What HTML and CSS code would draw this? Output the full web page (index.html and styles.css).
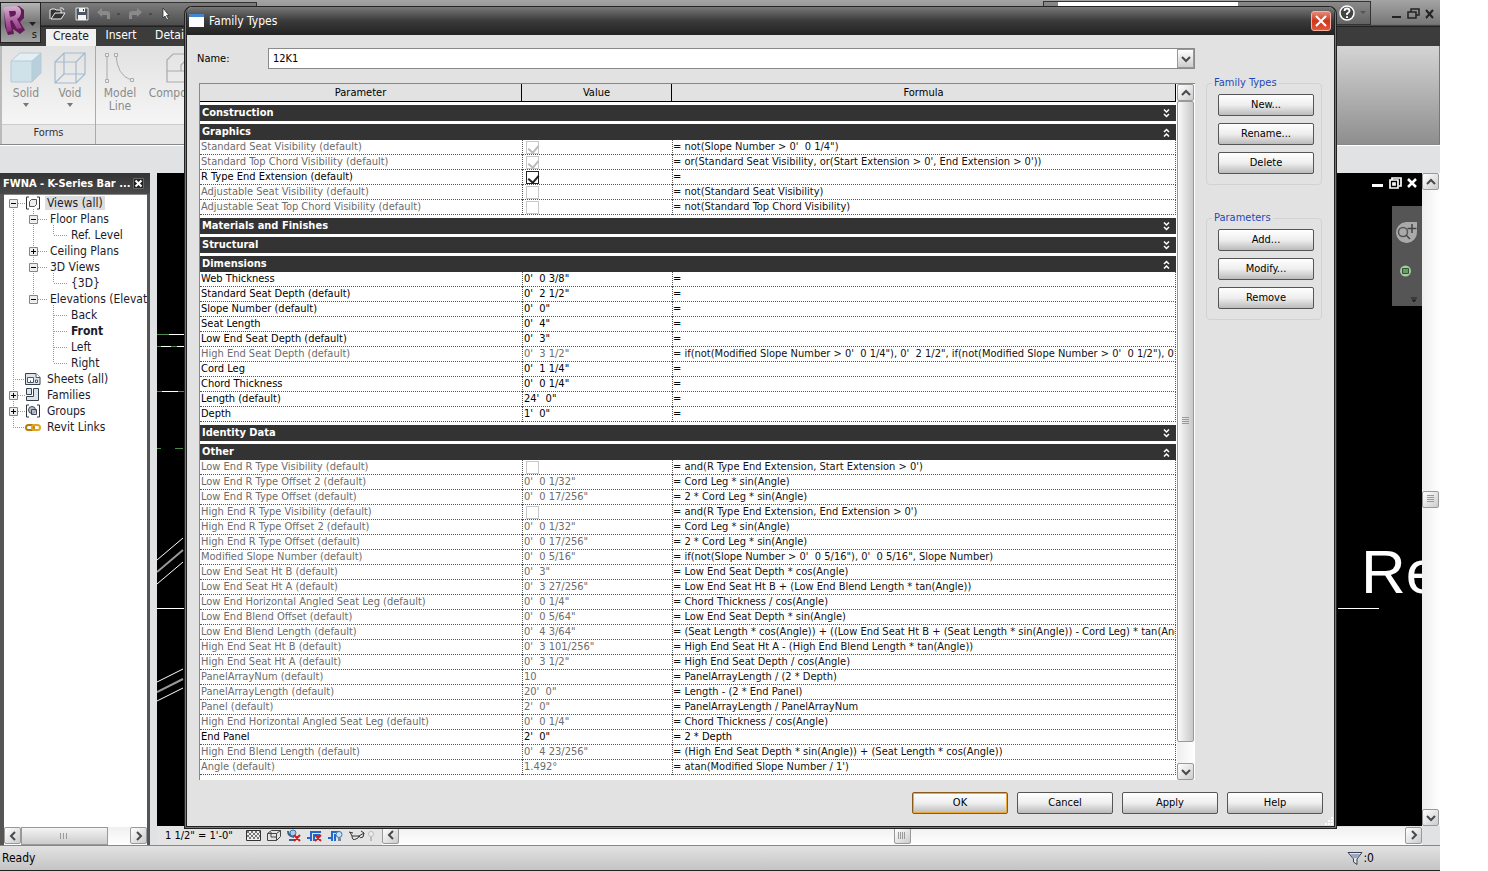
FILE: index.html
```html
<!DOCTYPE html>
<html lang="en">
<head>
<meta charset="utf-8">
<title>Family Types</title>
<link rel="stylesheet" href="styles.css">
</head>
<body>
<svg class="defs" aria-hidden="true">
  <symbol id="up" viewBox="0 0 10 10"><path d="M1 7l4-4 4 4" fill="none" stroke="#444a50" stroke-width="2"/></symbol>
  <symbol id="down" viewBox="0 0 10 10"><path d="M1 3l4 4 4-4" fill="none" stroke="#444a50" stroke-width="2"/></symbol>
  <symbol id="left" viewBox="0 0 10 10"><path d="M7 1L3 5l4 4" fill="none" stroke="#444a50" stroke-width="2"/></symbol>
  <symbol id="right" viewBox="0 0 10 10"><path d="M3 1l4 4-4 4" fill="none" stroke="#444a50" stroke-width="2"/></symbol>
  <symbol id="open" viewBox="0 0 7 9"><path d="M1 0.5l2.500 2.500L6 0.5M1 5l2.500 2.500L6 5" fill="none" stroke="#fff" stroke-width="1.500"/></symbol>
  <symbol id="shut" viewBox="0 0 7 9"><path d="M1 4l2.500-2.500L6 4M1 8.500L3.500 6 6 8.500" fill="none" stroke="#fff" stroke-width="1.500"/></symbol>
  <symbol id="plus" viewBox="0 0 9 9"><path d="M.5.5h8v8h-8z" fill="#eee" stroke="#858585"/><path d="M2 4.500h5M4.500 2v5" stroke="#000"/></symbol>
  <symbol id="minus" viewBox="0 0 9 9"><path d="M.5.5h8v8h-8z" fill="#eee" stroke="#858585"/><path d="M2 4.500h5" stroke="#000"/></symbol>
</svg>

<div class="app">
  <header class="titlebar">
    <button class="app-menu" aria-label="Application menu">
      <svg width="38" height="38" viewBox="0 0 38 38">
        <defs><linearGradient id="rg" x1="0" y1="0" x2="0" y2="1"><stop offset="0" stop-color="#d7b4d2"/><stop offset=".5" stop-color="#b06aa4"/><stop offset="1" stop-color="#8a2c7a"/></linearGradient></defs>
        <path d="M3 5l3-1 12-2 5 4v8l-4 4 5 8-5 4-7-5 1 5-6 1-3-8z" fill="#641a58"/>
        <path d="M2 5l2-2 11-1q5 1 5 6 0 5-4 7l5 9-5 1-5-9-2 1 2 10-5 1-3-21zM8 7l1 6 4-1q2-1 2-3 0-3-3-2z" fill="url(#rg)" fill-rule="evenodd"/>
        <path d="M28 18h7l-3.500 4z" fill="#222"/>
      </svg>
      <span class="app-letter">s</span>
    </button>
    <div class="quick">
      <svg width="18" height="14" viewBox="0 0 18 14"><path d="M1 12V3l2-1h3l1 1h5v3M2 12l4-6h10l-4 6z" fill="#333" stroke="#eee"/><path d="M11 1q3-1 4 2" fill="none" stroke="#eee"/></svg>
      <svg width="14" height="14" viewBox="0 0 14 14"><path d="M1 1h12v12H1z" fill="#4c5560" stroke="#dde3ea"/><path d="M4 1h6v4H4zM3 8h8v5H3z" fill="#f4f4f4"/><path d="M8 2h1v2H8z" fill="#333"/></svg>
      <svg width="23" height="14" viewBox="0 0 23 14"><path d="M0 5l5-4v3h5q3 0 3 3v5h-3V8H5v2z" fill="#8a8a8a"/><path d="M20 7h3" stroke="#333"/></svg>
      <svg width="25" height="14" viewBox="0 0 25 14"><path d="M14 5L9 1v3H4Q1 4 1 7v5h3V8h5v2z" fill="#8a8a8a"/><path d="M21 7h3" stroke="#333"/></svg>
      <svg width="9" height="14" viewBox="0 0 9 14"><path d="M2 1v10l2-2 2 4 1.500-1-2-3.500H8z" fill="#fff" stroke="#222" stroke-width=".7"/></svg>
    </div>
    <div class="info">
      <span class="info-field"></span>
      <svg width="16" height="16" viewBox="0 0 16 16"><circle cx="8" cy="8" r="7" fill="#444" stroke="#fff" stroke-width="1.500"/><path d="M5.500 6q0-2.500 2.500-2.500T10.500 6Q10.500 7 8 8.700V10" fill="none" stroke="#fff" stroke-width="1.800"/><path d="M7 11.200h2v1.800H7z" fill="#fff"/></svg>
      <svg width="6" height="4" viewBox="0 0 6 4"><path d="M0 0h6L3 3z" fill="#555"/></svg>
    </div>
    <div class="winctl">
      <svg width="44" height="14" viewBox="0 0 44 14"><path d="M1 10h9" stroke="#222" stroke-width="2"/><path d="M20 5V2h8v6h-3M17 5h8v6h-8z" fill="none" stroke="#222" stroke-width="1.500"/><path d="M35 3l7 8M42 3l-7 8" stroke="#222" stroke-width="2"/></svg>
    </div>
  </header>
  <nav class="tabs">
    <button class="tab tab-on">Create</button><button class="tab">Insert</button><button class="tab">Detail</button>
  </nav>
  <section class="ribbon">
    <div class="panel">
      <div class="tools">
        <button class="tool"><svg width="32" height="32" viewBox="0 0 32 32"><path d="M1 9h21v21H1z" fill="#cfe1e9"/><path d="M1 9l9-8h21l-9 8z" fill="#e4eff4"/><path d="M22 9l9-8v20l-9 9z" fill="#b9d0dc"/><path d="M1 9h21v21H1zM1 9l9-8h21v20l-9 9M22 9l9-8" fill="none" stroke="#b4cbd8"/></svg><span>Solid</span><i class="caret"></i></button>
        <button class="tool"><svg width="32" height="32" viewBox="0 0 32 32"><path d="M1 10h21v21H1zM1 10l9-9h21v21l-9 9M22 10l9-9M10 1v21H31M10 22l-9 9" fill="none" stroke="#a5bace" stroke-width="1.200"/></svg><span>Void</span><i class="caret"></i></button>
      </div>
      <div class="panel-name">Forms</div>
    </div>
    <div class="panel panel-wide">
      <div class="tools">
        <button class="tool"><svg width="32" height="32" viewBox="0 0 32 32"><path d="M3 3v25M12 3q1 20 15 25" fill="none" stroke="#aaa"/><path d="M1.500 1.500h3v3h-3zM1.500 27.500h3v3h-3zM10.500 1.500h3v3h-3zM26.500 26.500h3v3h-3z" fill="#eee" stroke="#aaa"/></svg><span>Model<br>Line</span></button>
        <button class="tool tool-wide"><svg width="32" height="32" viewBox="0 0 32 32"><path d="M3 19V8l6-6h20v17M3 19v11h26V19zM3 19h14v-6l4-4h8" fill="none" stroke="#aaa" stroke-width="1.200"/></svg><span>Component</span></button>
      </div>
      <div class="panel-name"></div>
    </div>
    <div class="ribbon-rest"></div>
  </section>
  <div class="options"></div>

  <main class="work">
    <aside class="browser">
      <div class="browser-head"><span>FWNA - K-Series Bar ...</span><button class="bare" aria-label="Close browser"><svg width="11" height="11" viewBox="0 0 11 11"><path d="M.5.5h10v10H.5z" fill="#222" stroke="#666"/><path d="M2.500 2.500l6 6M8.500 2.500l-6 6" stroke="#fff" stroke-width="2"/></svg></button></div>
      <div class="browser-body">
        <svg class="guides" width="142" height="240" viewBox="0 0 142 240"><path d="M9.500 14v218M29.500 14v90M49.500 30v10M49.500 78v10M49.500 110v58M14 8.500h8M9 184.500h12M14 200.500h8M14 216.500h8M9 232.500h12M34 24.500h10M34 56.500h10M34 72.500h10M34 104.500h10M50 40.500h14M50 88.500h14M50 120.500h14M50 136.500h14M50 152.500h14M50 168.500h14" fill="none" stroke="#999" stroke-dasharray="1 1"/></svg>
        <ul class="tree">
          <li class="l0"><svg width="9" height="9"><use href="#minus"/></svg><svg class="ico" width="16" height="14" viewBox="0 0 16 14"><path d="M4 1H1.500v12H4M12 1h2.500v12H12" fill="none" stroke="#333"/><path d="M4.500 5.500l2-2h5v5l-2 2h-5z" fill="#eee" stroke="#555"/></svg><span class="picked">Views (all)</span></li>
          <li class="l1"><svg width="9" height="9"><use href="#minus"/></svg><span>Floor Plans</span></li>
          <li class="l2"><span>Ref. Level</span></li>
          <li class="l1"><svg width="9" height="9"><use href="#plus"/></svg><span>Ceiling Plans</span></li>
          <li class="l1"><svg width="9" height="9"><use href="#minus"/></svg><span>3D Views</span></li>
          <li class="l2"><span>{3D}</span></li>
          <li class="l1"><svg width="9" height="9"><use href="#minus"/></svg><span>Elevations (Elevati</span></li>
          <li class="l2"><span>Back</span></li>
          <li class="l2"><b>Front</b></li>
          <li class="l2"><span>Left</span></li>
          <li class="l2"><span>Right</span></li>
          <li class="l0"><i class="no-box"></i><svg class="ico" width="16" height="14" viewBox="0 0 16 14"><path d="M.5 1.500H11l4 4v7H.5z" fill="#dfe5ec" stroke="#38424e"/><path d="M11 1.500v4h4M2.500 5.500h6v5h-6zM5.500 8.500v2M10.500 8v2.500h2V8z" fill="#fff" stroke="#4a5868"/></svg><span>Sheets (all)</span></li>
          <li class="l0"><svg width="9" height="9"><use href="#plus"/></svg><svg class="ico" width="16" height="14" viewBox="0 0 16 14"><path d="M1.500.5h5v6h-5zM8.500.5h5v12h-12v-4h7z" fill="#dfe5ec" stroke="#38424e"/></svg><span>Families</span></li>
          <li class="l0"><svg width="9" height="9"><use href="#plus"/></svg><svg class="ico" width="16" height="14" viewBox="0 0 16 14"><path d="M4 1H1.500v12H4M12 1h2.500v12H12" fill="none" stroke="#333"/><circle cx="7" cy="6" r="3.500" fill="#b7c2ce" stroke="#445"/><path d="M6.500 5.500h5v5h-5z" fill="#b7c2ce" fill-opacity=".6" stroke="#445"/></svg><span>Groups</span></li>
          <li class="l0"><i class="no-box"></i><svg class="ico" width="16" height="14" viewBox="0 0 16 14"><rect x="1" y="5" width="8" height="5" rx="2.500" fill="none" stroke="#b87b08" stroke-width="2"/><rect x="7" y="5" width="8" height="5" rx="2.500" fill="none" stroke="#e0a51a" stroke-width="2"/></svg><span>Revit Links</span></li>
        </ul>
      </div>
      <div class="hbar">
        <button class="sb" aria-label="Scroll left"><svg width="10" height="10"><use href="#left"/></svg></button>
        <span class="thumb-h"><svg width="9" height="6" viewBox="0 0 9 6"><path d="M.5 0v6M3.500 0v6M6.500 0v6" stroke="#999"/></svg></span>
        <span class="grow"></span>
        <button class="sb" aria-label="Scroll right"><svg width="10" height="10"><use href="#right"/></svg></button>
      </div>
    </aside>

    <section class="view">
      <div class="canvas">
        <svg class="drawing" width="30" height="653" viewBox="0 0 30 653"><path d="M0 161.500h12M0 173.500h30M0 218.500h30M0 275.500h4M18 275.500h8" stroke="#4a8a4a"/><path d="M12 161.500h18M4 173.500h10M20 173.500h8M5 218.500h16M0 435.500h30M0 387l26-22M0 411l26-22M0 509l26-13M0 528l26-13" stroke="#fff" fill="none"/><path d="M0 399l26-22M0 519l26-13" stroke="#999" stroke-width="2"/></svg>
        <div class="level"><span class="level-name">Re</span></div>
        <div class="doc-ctl"><svg width="48" height="12" viewBox="0 0 48 12"><path d="M1 8.500h11" stroke="#fff" stroke-width="3"/><path d="M21 3V1h9v8h-2M19 3h8v8h-8zM22 6h2v2h-2z" fill="none" stroke="#fff" stroke-width="1.700"/><path d="M37 2l8 8M45 2l-8 8" stroke="#fff" stroke-width="2.500"/></svg></div>
        <div class="navbar"><svg width="30" height="100" viewBox="0 0 30 100"><path d="M14 16h11v10a10.500 10.500 0 1 1-11-10z" fill="#aaa"/><circle cx="11" cy="26" r="4.500" fill="none" stroke="#555" stroke-width="1.500"/><path d="M14 29l4 4M20 18v9M15.500 22.500h9" stroke="#444" stroke-width="1.500"/><circle cx="13.500" cy="65" r="5.500" fill="#a8c8a4"/><path d="M10.500 62.500h6v5h-6z" fill="#6d9a69" stroke="#2d5a2c"/><path d="M19 92h6M20 94h4l-2 2z" fill="#222" stroke="#222"/></svg></div>
      </div>
      <div class="vbar view-v">
        <button class="sb" aria-label="Scroll up"><svg width="10" height="10"><use href="#up"/></svg></button>
        <span class="knob"><svg width="8" height="9" viewBox="0 0 8 9"><path d="M0 .5h7M0 2.500h7M0 4.500h7M0 6.500h7" stroke="#999"/></svg></span>
        <button class="sb" aria-label="Scroll down"><svg width="10" height="10"><use href="#down"/></svg></button>
      </div>
      <div class="viewbar">
        <button class="bare scale">1 1/2" = 1'-0"</button>
        <svg class="view-icons" width="130" height="14" viewBox="0 0 130 14"><path d="M.5 1.500h14v10H.5z" fill="#eee" stroke="#333"/><path d="M1 3h13M1 7h13" stroke="#777" stroke-width="2" stroke-dasharray="2 2"/><path d="M3 5h11M3 9h11" stroke="#777" stroke-width="2" stroke-dasharray="2 2"/><path d="M21.500 4.500h9v7h-9zM21.500 4.500l4-3h9l-4 3M34.500 1.500v6l-4 4M25 3v5h5" fill="none" stroke="#444"/><path d="M42 2q0 5 6 6M43 11h6" fill="none" stroke="#3b5f88" stroke-width="2"/><circle cx="47" cy="4" r="3" fill="#a9cdee" stroke="#3977ad"/><path d="M61 9h3M65 12V3h10M68 12V6h6M82 9h3M86 12V3h8M89 12V6h3" fill="none" stroke="#2469c8" stroke-width="2"/><path d="M48 6l6 6M54 6l-6 6M69 6l6 6M75 6l-6 6" stroke="#c81e1e" stroke-width="2"/><circle cx="93" cy="5.500" r="3" fill="#cbe3f6" stroke="#3977ad"/><path d="M92 9h3v3h-3z" fill="#789"/><path d="M103 3l4 1M106 7q0 5 4 3 3-1 3-3zM113 7q1 3 4 1l1-4zM106 7l-2-4M118 4l-3-2" fill="none" stroke="#333"/><circle cx="125" cy="5" r="2.500" fill="#eee" stroke="#bbb"/><path d="M124 8h2v4h-2z" fill="#bbb"/></svg>
        <div class="hbar view-h">
          <button class="sb" aria-label="Scroll left"><svg width="10" height="10"><use href="#left"/></svg></button>
          <span class="knob"><svg width="9" height="7" viewBox="0 0 9 7"><path d="M.5 0v7M2.500 0v7M4.500 0v7M6.500 0v7" stroke="#999"/></svg></span>
          <button class="sb" aria-label="Scroll right"><svg width="10" height="10"><use href="#right"/></svg></button>
        </div>
      </div>
    </section>
  </main>
  <footer class="status"><span>Ready</span><span class="filter"><svg width="16" height="15" viewBox="0 0 16 15"><path d="M1 1.500h14L10 8v5.500L6.500 11V8z" fill="#dfe3ee" stroke="#39404e"/><path d="M3 3h10l-3 4H6z" fill="#9ba6c0"/></svg>:0</span></footer>

  <section class="dialog" role="dialog" aria-labelledby="dlg">
    <header class="dialog-head">
      <svg width="15" height="14" viewBox="0 0 15 14"><path d="M0 0h15v13H0z" fill="#fff"/><path d="M0 0h15v3H0z" fill="#3f87d0"/></svg>
      <h1 id="dlg">Family Types</h1>
      <button class="close" aria-label="Close"><svg width="12" height="12" viewBox="0 0 12 12"><path d="M1 1l10 10M11 1L1 11" stroke="#fff" stroke-width="2"/></svg></button>
    </header>
    <div class="dialog-body">
      <div class="left-col">
        <div class="name-row"><label for="nm">Name:</label><div class="combo"><select id="nm"><option>12K1</option></select><span class="combo-btn"><svg width="10" height="10"><use href="#down"/></svg></span></div></div>
        <div class="list">
          <div class="list-view">
          <table>
            <colgroup><col class="c-par"><col class="c-val"><col></colgroup>
            <thead><tr><th>Parameter</th><th>Value</th><th>Formula</th></tr></thead>
            <tbody>
            <tr class="sec"><td colspan="3"><button>Construction<svg width="7" height="9"><use href="#open"/></svg></button></td></tr>
            <tr class="sec"><td colspan="3"><button>Graphics<svg width="7" height="9"><use href="#shut"/></svg></button></td></tr>
            <tr class="off"><td>Standard Seat Visibility (default)</td><td><input type="checkbox" aria-label="Standard Seat Visibility" checked disabled></td><td>= not(Slope Number &gt; 0'&nbsp; 0 1/4")</td></tr>
            <tr class="off"><td>Standard Top Chord Visibility (default)</td><td><input type="checkbox" aria-label="Standard Top Chord Visibility" checked disabled></td><td>= or(Standard Seat Visibility, or(Start Extension &gt; 0', End Extension &gt; 0'))</td></tr>
            <tr><td>R Type End Extension (default)</td><td><input type="checkbox" aria-label="R Type End Extension" checked></td><td>=</td></tr>
            <tr class="off"><td>Adjustable Seat Visibility (default)</td><td><input type="checkbox" aria-label="Adjustable Seat Visibility" disabled></td><td>= not(Standard Seat Visibility)</td></tr>
            <tr class="off"><td>Adjustable Seat Top Chord Visibility (default)</td><td><input type="checkbox" aria-label="Adjustable Seat Top Chord Visibility" disabled></td><td>= not(Standard Top Chord Visibility)</td></tr>
            <tr class="sec"><td colspan="3"><button>Materials and Finishes<svg width="7" height="9"><use href="#open"/></svg></button></td></tr>
            <tr class="sec"><td colspan="3"><button>Structural<svg width="7" height="9"><use href="#open"/></svg></button></td></tr>
            <tr class="sec"><td colspan="3"><button>Dimensions<svg width="7" height="9"><use href="#shut"/></svg></button></td></tr>
            <tr><td>Web Thickness</td><td>0'&nbsp; 0 3/8"</td><td>=</td></tr>
            <tr><td>Standard Seat Depth (default)</td><td>0'&nbsp; 2 1/2"</td><td>=</td></tr>
            <tr><td>Slope Number (default)</td><td>0'&nbsp; 0"</td><td>=</td></tr>
            <tr><td>Seat Length</td><td>0'&nbsp; 4"</td><td>=</td></tr>
            <tr><td>Low End Seat Depth (default)</td><td>0'&nbsp; 3"</td><td>=</td></tr>
            <tr class="off"><td>High End Seat Depth (default)</td><td>0'&nbsp; 3 1/2"</td><td>= if(not(Modified Slope Number &gt; 0'&nbsp; 0 1/4"), 0'&nbsp; 2 1/2", if(not(Modified Slope Number &gt; 0'&nbsp; 0 1/2"), 0'&nbsp; 3 1</td></tr>
            <tr><td>Cord Leg</td><td>0'&nbsp; 1 1/4"</td><td>=</td></tr>
            <tr><td>Chord Thickness</td><td>0'&nbsp; 0 1/4"</td><td>=</td></tr>
            <tr><td>Length (default)</td><td>24'&nbsp; 0"</td><td>=</td></tr>
            <tr><td>Depth</td><td>1'&nbsp; 0"</td><td>=</td></tr>
            <tr class="sec"><td colspan="3"><button>Identity Data<svg width="7" height="9"><use href="#open"/></svg></button></td></tr>
            <tr class="sec"><td colspan="3"><button>Other<svg width="7" height="9"><use href="#shut"/></svg></button></td></tr>
            <tr class="off"><td>Low End R Type Visibility (default)</td><td><input type="checkbox" aria-label="Low End R Type Visibility" disabled></td><td>= and(R Type End Extension, Start Extension &gt; 0')</td></tr>
            <tr class="off"><td>Low End R Type Offset 2 (default)</td><td>0'&nbsp; 0 1/32"</td><td>= Cord Leg * sin(Angle)</td></tr>
            <tr class="off"><td>Low End R Type Offset (default)</td><td>0'&nbsp; 0 17/256"</td><td>= 2 * Cord Leg * sin(Angle)</td></tr>
            <tr class="off"><td>High End R Type Visibility (default)</td><td><input type="checkbox" aria-label="High End R Type Visibility" disabled></td><td>= and(R Type End Extension, End Extension &gt; 0')</td></tr>
            <tr class="off"><td>High End R Type Offset 2 (default)</td><td>0'&nbsp; 0 1/32"</td><td>= Cord Leg * sin(Angle)</td></tr>
            <tr class="off"><td>High End R Type Offset (default)</td><td>0'&nbsp; 0 17/256"</td><td>= 2 * Cord Leg * sin(Angle)</td></tr>
            <tr class="off"><td>Modified Slope Number (default)</td><td>0'&nbsp; 0 5/16"</td><td>= if(not(Slope Number &gt; 0'&nbsp; 0 5/16"), 0'&nbsp; 0 5/16", Slope Number)</td></tr>
            <tr class="off"><td>Low End Seat Ht B (default)</td><td>0'&nbsp; 3"</td><td>= Low End Seat Depth * cos(Angle)</td></tr>
            <tr class="off"><td>Low End Seat Ht A (default)</td><td>0'&nbsp; 3 27/256"</td><td>= Low End Seat Ht B + (Low End Blend Length * tan(Angle))</td></tr>
            <tr class="off"><td>Low End Horizontal Angled Seat Leg (default)</td><td>0'&nbsp; 0 1/4"</td><td>= Chord Thickness / cos(Angle)</td></tr>
            <tr class="off"><td>Low End Blend Offset (default)</td><td>0'&nbsp; 0 5/64"</td><td>= Low End Seat Depth * sin(Angle)</td></tr>
            <tr class="off"><td>Low End Blend Length (default)</td><td>0'&nbsp; 4 3/64"</td><td>= (Seat Length * cos(Angle)) + ((Low End Seat Ht B + (Seat Length * sin(Angle)) - Cord Leg) * tan(Angl</td></tr>
            <tr class="off"><td>High End Seat Ht B (default)</td><td>0'&nbsp; 3 101/256"</td><td>= High End Seat Ht A - (High End Blend Length * tan(Angle))</td></tr>
            <tr class="off"><td>High End Seat Ht A (default)</td><td>0'&nbsp; 3 1/2"</td><td>= High End Seat Depth / cos(Angle)</td></tr>
            <tr class="off"><td>PanelArrayNum (default)</td><td>10</td><td>= PanelArrayLength / (2 * Depth)</td></tr>
            <tr class="off"><td>PanelArrayLength (default)</td><td>20'&nbsp; 0"</td><td>= Length - (2 * End Panel)</td></tr>
            <tr class="off"><td>Panel (default)</td><td>2'&nbsp; 0"</td><td>= PanelArrayLength / PanelArrayNum</td></tr>
            <tr class="off"><td>High End Horizontal Angled Seat Leg (default)</td><td>0'&nbsp; 0 1/4"</td><td>= Chord Thickness / cos(Angle)</td></tr>
            <tr><td>End Panel</td><td>2'&nbsp; 0"</td><td>= 2 * Depth</td></tr>
            <tr class="off"><td>High End Blend Length (default)</td><td>0'&nbsp; 4 23/256"</td><td>= (High End Seat Depth * sin(Angle)) + (Seat Length * cos(Angle))</td></tr>
            <tr class="off"><td>Angle (default)</td><td>1.492°</td><td>= atan(Modified Slope Number / 1')</td></tr>
            </tbody>
          </table>
          </div>
          <div class="vbar">
            <button class="sb" aria-label="Scroll up"><svg width="10" height="10"><use href="#up"/></svg></button>
            <span class="thumb-v"><svg width="8" height="9" viewBox="0 0 8 9"><path d="M0 .5h7M0 2.500h7M0 4.500h7M0 6.500h7" stroke="#999"/></svg></span>
            <button class="sb" aria-label="Scroll down"><svg width="10" height="10"><use href="#down"/></svg></button>
          </div>
        </div>
      </div>
      <div class="right-col">
        <fieldset><legend>Family Types</legend><button class="btn">New...</button><button class="btn">Rename...</button><button class="btn">Delete</button></fieldset>
        <fieldset><legend>Parameters</legend><button class="btn">Add...</button><button class="btn">Modify...</button><button class="btn">Remove</button></fieldset>
      </div>
    </div>
    <footer class="actions"><button class="btn btn-main">OK</button><button class="btn">Cancel</button><button class="btn">Apply</button><button class="btn">Help</button></footer>
    <svg class="grip" width="9" height="9" viewBox="0 0 9 9" aria-hidden="true"><path d="M6 0h2v2H6zM3 3h2v2H3zM6 3h2v2H6zM0 6h2v2H0zM3 6h2v2H3zM6 6h2v2H6z" fill="#fff"/></svg>
  </section>
</div>
</body>
</html>
```
FILE: styles.css
```css
* { box-sizing: border-box; }
body { margin: 0; background: #fff; color: #000; font: 11px/14px "DejaVu Sans Condensed", "Noto Sans", sans-serif; overflow: hidden; }
button, select { font: inherit; color: inherit; padding: 0; margin: 0; }
svg { display: block; flex: none; }
.defs { position: absolute; width: 0; height: 0; }
.bare { border: 0; background: none; }
.app { position: relative; margin-right: 48px; height: 100vh; display: flex; flex-direction: column; background: #e1e2e4; }

.titlebar { flex: none; display: flex; height: 27px; padding-left: 41px; background: linear-gradient(#a4a4a4, #777 90%, #222 98%); }
.app-menu { position: absolute; left: 0; top: 2px; width: 41px; height: 41px; border: 1px solid #222; background: linear-gradient(#b4b4b4, #777 50%, #a4a4a4); }
.app-letter { position: absolute; right: 3px; bottom: 0; color: #111; }
.quick { display: flex; align-items: center; gap: 8px; width: 216px; margin: 2px 0 1px; padding-left: 8px; border: 1px solid #333; border-left: 0; background: linear-gradient(#7c7c7c, #4d4d4d); }
.info { display: flex; align-items: center; gap: 5px; width: 328px; margin: 1px 0 2px auto; padding: 0 4px 0 14px; border: 1px solid #333; background: linear-gradient(#8a8a8a, #626262); }
.info-field { align-self: flex-start; width: 180px; height: 4px; margin-right: auto; background: #fff; }
.winctl { display: flex; align-items: center; width: 69px; padding-left: 20px; }
.tabs { flex: none; display: flex; height: 19px; padding-left: 46px; background: #3c3c3c; }
.tab { width: 50px; height: 16px; border: 0; background: none; color: #fff; font-size: 12px; text-align: center; }
.tab-on { height: 17px; margin-top: 2px; padding-bottom: 4px; background: #f1f1f1; color: #222; }
.ribbon { flex: none; display: flex; height: 99px; border-bottom: 1px solid #888; background: #eee; }
.panel { display: flex; flex-direction: column; width: 96px; border-right: 1px solid #aaa; border-left: 2px solid #bbb; background: linear-gradient(#e2e2e2, #fafafa); }
.panel-wide { width: 300px; border-left: 0; }
.tools { display: flex; flex: 1; padding-top: 6px; }
.tool { display: flex; flex-direction: column; align-items: center; gap: 3px; width: 44px; border: 0; background: none; color: #8b8b8b; font-size: 12px; line-height: 13px; }
.tool:first-child { margin-left: 2px; }
.tool-wide { width: 72px; }
.panel-wide .tool:first-child { width: 48px; margin-left: 0; }
.caret { border: 3px solid transparent; border-top: 4px solid #777; }
.panel-name { height: 20px; border-top: 1px solid #ccc; background: #e6e6e6; color: #333; text-align: center; line-height: 16px; }
.ribbon-rest { flex: 1; border-right: 1px solid #777; background: linear-gradient(#d4d4d4, #8e8e8e); }
.options { flex: none; height: 28px; border-top: 1px solid #fff; }

.work { flex: 1; min-height: 0; display: flex; gap: 7px; border-bottom: 1px solid #888; }
.browser { flex: none; display: flex; flex-direction: column; width: 150px; padding: 0 3px 0 4px; background: #555; }
.browser-head { display: flex; align-items: center; justify-content: space-between; height: 21px; margin: 0 -3px 0 -4px; padding: 0 6px 0 3px; background: linear-gradient(#333, #4a4a4a); color: #fff; font-weight: bold; white-space: nowrap; }
.browser-body { position: relative; flex: 1; min-height: 0; overflow: hidden; background: #fff; border-top: 1px solid #888; }
.guides { position: absolute; left: 0; top: 0; }
.tree { position: relative; margin: 0; padding: 0; list-style: none; white-space: nowrap; }
.tree li { display: flex; align-items: center; height: 16px; color: #1b1b2a; font-size: 12px; }
.tree .l0 { padding-left: 5px; }
.tree .l1 { padding-left: 25px; gap: 12px; }
.tree .l2 { padding-left: 67px; }
.ico { margin: 0 6px 0 7px; }
.no-box { width: 9px; }
.picked { margin-left: -2px; padding: 0 2px; background: #ddd; }

.hbar { flex: none; display: flex; height: 18px; background: linear-gradient(#f0f0f0, #fff); }
.vbar { flex: none; display: flex; flex-direction: column; width: 18px; background: linear-gradient(90deg, #eee, #fff); }
.sb, .knob { flex: none; display: grid; place-items: center; width: 17px; height: 17px; border: 1px solid #999; border-radius: 2px; background: linear-gradient(135deg, #fff, #ccc); }
.thumb-h { display: grid; place-items: center; width: 87px; border: 1px solid #999; background: linear-gradient(#f4f4f4, #ccc); }
.grow { flex: 1; }
.thumb-v { flex: none; display: grid; place-items: center; height: 641px; width: 17px; border: 1px solid #999; border-radius: 2px; background: linear-gradient(90deg, #fafafa, #c8c8c8); }
.view-v, .view-h { justify-content: space-between; }
.list .vbar .sb:last-child { margin-top: auto; }

.view { flex: 1; min-width: 0; display: grid; grid-template: minmax(0, 1fr) 19px / minmax(0, 1fr) 18px; }
.canvas { position: relative; overflow: hidden; background: #000; }
.drawing { position: absolute; left: 0; top: 0; }
.level { position: absolute; right: 0; top: 362px; width: 84px; height: 74px; padding-left: 23px; overflow: hidden; color: #fff; font: 62px/74px "Liberation Sans", sans-serif; white-space: nowrap; }
.level::after { content: ""; position: absolute; left: 0; bottom: 0; width: 41px; height: 1px; background: #fff; }
.doc-ctl { position: absolute; right: 3px; top: 4px; }
.navbar { position: absolute; right: 0; top: 33px; background: #555; }
.viewbar { grid-column: 1; display: flex; align-items: center; padding-left: 8px; background: #e4e4e4; }
.scale { width: 73px; text-align: left; white-space: nowrap; }
.view-icons { margin-left: 8px; }
.view-h { flex: 1; margin-left: 6px; }

.status { flex: none; display: flex; align-items: center; justify-content: space-between; height: 25px; padding: 0 66px 0 2px; border-bottom: 1px solid #222; background: linear-gradient(#e2e2e2, #c4c4c4); font-size: 12px; }
.filter { display: flex; align-items: center; }

.dialog { position: absolute; left: 184px; right: 103px; top: 6px; border: 3px solid #222; border-top-width: 1px; outline: 1px solid #777; outline-offset: -2px; border-radius: 8px 8px 0 0; background: #e2e2e2; }
.dialog-head { display: flex; align-items: center; gap: 5px; height: 28px; padding: 0 3px 0 2px; border-radius: 6px 6px 0 0; background: linear-gradient(#777, #3a3a3a 50%, #222); color: #fff; }
.dialog-head h1 { flex: 1; margin: 0; font: 12px/16px "DejaVu Sans Condensed", "Noto Sans", sans-serif; }
.close { display: grid; place-items: center; width: 20px; height: 20px; border: 1px solid #f4b0a0; border-radius: 3px; background: linear-gradient(#e58a78, #d1341a 50%, #e05a3c); }
.dialog-body { display: flex; gap: 11px; padding: 13px 12px 0 10px; }
.left-col { flex: 1; min-width: 0; }
.name-row { display: flex; align-items: center; }
.name-row label { width: 71px; }
.combo { position: relative; flex: 1; height: 21px; }
.combo select { appearance: none; width: 100%; height: 21px; padding: 0 4px; border: 1px solid #8a8a8a; border-radius: 0; background: #fff; }
.combo-btn { position: absolute; right: 1px; top: 1px; display: grid; place-items: center; width: 17px; height: 19px; border: 1px solid #999; background: linear-gradient(#fff, #ccc); pointer-events: none; }
.list { display: flex; margin: 14px 0 0 2px; height: 697px; border-top: 1px solid #888; border-left: 1px solid #888; background: #fff; }
.list-view { flex: 1; min-width: 0; overflow: hidden; margin-right: 1px; background: #fff; }
table { width: 100%; table-layout: fixed; border-spacing: 0; }
.c-par { width: 322px; }
.c-val { width: 150px; }
th { height: 18px; padding: 0; border-right: 1px solid #000; border-bottom: 1px solid #000; background: #e2e2e2; font-weight: normal; }
td { height: 15px; padding: 0 0 0 1px; border-bottom: 1px dotted #555; line-height: 14px; white-space: nowrap; overflow: hidden; }
td + td { border-left: 1px dotted #555; }
td:last-child { padding-left: 0; border-right: 1px dotted #555; }
.off td { color: #6c6c6c; }
.off td:last-child { color: #111; }
.sec td { padding: 3px 0 0; border: 0; }
.sec td:last-child { border: 0; }
.sec button { display: flex; align-items: center; justify-content: space-between; width: 100%; height: 16px; padding: 0 6px 0 2px; border: 0; background: #333; color: #fff; font-weight: bold; }
td input { appearance: none; display: block; position: relative; width: 13px; height: 13px; margin: 0 0 0 2px; border: 1px solid #222; background: #fff; }
td input:disabled { border-color: #c8c8c8; }
td input:checked::after { content: ""; position: absolute; left: 3px; top: 1px; width: 5px; height: 8px; border: solid #222; border-width: 0 2px 2px 0; transform: rotate(40deg); }
td input:disabled:checked::after { border-color: #bbb; }

.right-col { width: 116px; padding-top: 28px; }
fieldset { display: flex; flex-direction: column; gap: 7px; min-width: 0; margin: 0 0 26px; padding: 4px 8px 10px 11px; border: 1px solid #d2d2d2; border-radius: 4px; }
legend { margin-left: -6px; padding: 0 2px; color: #1f49b8; }
.btn { width: 96px; height: 22px; border: 1px solid #555; border-radius: 2px; background: linear-gradient(#fff, #eee 50%, #bbb); }
.btn-main { border-color: #8a5a1a; box-shadow: inset 0 0 0 1px #eda83c; }
.actions { display: flex; justify-content: flex-end; gap: 9px; padding: 12px 11px 12px 0; }
.grip { position: absolute; right: 0; bottom: 0; }
```
